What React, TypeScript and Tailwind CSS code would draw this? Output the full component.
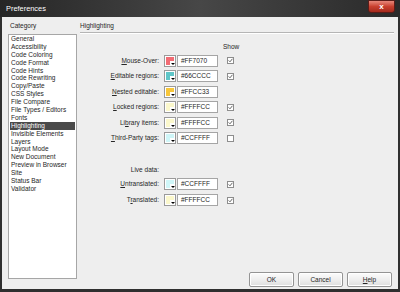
import type { ReactNode } from 'react';

const categories = [
  'General',
  'Accessibility',
  'Code Coloring',
  'Code Format',
  'Code Hints',
  'Code Rewriting',
  'Copy/Paste',
  'CSS Styles',
  'File Compare',
  'File Types / Editors',
  'Fonts',
  'Highlighting',
  'Invisible Elements',
  'Layers',
  'Layout Mode',
  'New Document',
  'Preview in Browser',
  'Site',
  'Status Bar',
  'Validator',
];

interface ColorRow {
  label: ReactNode;
  swatch: string;
  value: string;
  show: boolean | null;
}

const rows: ColorRow[] = [
  { label: <><u>M</u>ouse-Over:</>, swatch: 'bg-[#f26c74]', value: '#FF7070', show: true },
  { label: <><u>E</u>ditable regions:</>, swatch: 'bg-[#5fc6c8]', value: '#66CCCC', show: true },
  { label: <><u>N</u>ested editable:</>, swatch: 'bg-[#f7c63a]', value: '#FFCC33', show: null },
  { label: <><u>L</u>ocked regions:</>, swatch: 'bg-[#fbf8cc]', value: '#FFFFCC', show: true },
  { label: <>Li<u>b</u>rary items:</>, swatch: 'bg-[#fbf8cc]', value: '#FFFFCC', show: true },
  { label: <><u>T</u>hird-Party tags:</>, swatch: 'bg-[#cff6f8]', value: '#CCFFFF', show: false },
];

const liveRows: ColorRow[] = [
  { label: <><u>U</u>ntranslated:</>, swatch: 'bg-[#cff6f8]', value: '#CCFFFF', show: true },
  { label: <>T<u>r</u>anslated:</>, swatch: 'bg-[#fbf8cc]', value: '#FFFFCC', show: true },
];

function Checkbox({ checked }: { checked: boolean }) {
  return (
    <div className="w-[7px] h-[7px] border border-[#8d8d8d] bg-white flex items-center justify-center">
      {checked && (
        <svg width="5" height="5" viewBox="0 0 5 5">
          <path d="M0.6 2.4 L2 3.8 L4.4 0.8" stroke="#555" strokeWidth="0.9" fill="none" />
        </svg>
      )}
    </div>
  );
}

function Row({ row, h }: { row: ColorRow; h: string }) {
  return (
    <div className={`flex items-center ${h}`}>
      <div className="w-[79px] text-right">{row.label}</div>
      <div className="ml-[5px] w-[12px] h-[12px] border border-[#9a9a9a] bg-white p-[1px] relative">
        <div className={`w-full h-full ${row.swatch}`} />
        <div className="absolute right-0 bottom-0 w-[5px] h-[5px] bg-white flex items-end justify-center">
          <div className="w-0 h-0 border-l-[2px] border-r-[2px] border-t-[2px] border-l-transparent border-r-transparent border-t-black mb-[1px]" />
        </div>
      </div>
      <div className="ml-[1px] w-[41px] h-[12px] border border-[#a5a5a5] bg-white pl-[3px] flex items-center leading-none">
        {row.value}
      </div>
      <div className="ml-[9px]">{row.show !== null && <Checkbox checked={row.show} />}</div>
    </div>
  );
}

function Button({ children }: { children: ReactNode }) {
  return (
    <div className="w-[45px] h-[15px] rounded-[2px] border border-[#949494] bg-gradient-to-b from-[#fcfcfc] via-[#efefef] to-[#dedede] flex items-center justify-center shadow-[inset_0_0_0_1px_#ffffff]">
      {children}
    </div>
  );
}

export default function App() {
  return (
    <div
      className="w-[400px] h-[292px] bg-[#2f2f2f] flex flex-col text-[6.5px] text-[#262626] leading-[8px]"
      style={{ fontFamily: '"Liberation Sans", Arial, sans-serif' }}
    >
      {/* title bar */}
      <div className="h-[17px] flex items-start bg-gradient-to-r from-[#262626] via-[#474747] to-[#2a2a2a]">
        <div className="ml-[6px] mt-[4px] text-white text-[7.4px] leading-[9px]">Preferences</div>
        <div className="ml-auto mr-[5px] w-[27px] h-[13px] rounded-b-[3px] border border-[#5a1c18] bg-gradient-to-b from-[#e7877a] via-[#c9402f] to-[#a52a1c] flex items-center justify-center">
          <span className="text-white text-[8px] font-bold leading-none">x</span>
        </div>
      </div>

      {/* body */}
      <div className="flex-1 mx-[2px] mb-[3px] bg-[#eeeeee] flex">
        <div className="ml-[6px] w-[69px] flex flex-col">
          <div className="mt-[5px] h-[8px] pl-[2px]">Category</div>
          <div className="mt-[4px] h-[245px] border border-[#a6a6a6] bg-white px-[1px]">
            {categories.map((c) => (
              <div
                key={c}
                className={`h-[7.9px] pl-[1px] whitespace-nowrap ${
                  c === 'Highlighting' ? 'bg-[#4a4a4a] text-white' : ''
                }`}
              >
                {c}
              </div>
            ))}
          </div>
        </div>

        <div className="ml-[3px] flex-1 mr-[6px] flex flex-col">
          <div className="mt-[5px] h-[8px]">Highlighting</div>
          <div className="mt-[2px] mr-[-2px] h-[1px] bg-[#b5b5b5] border-b border-white box-content" />

          <div className="mt-[9px] h-[8px] pl-[143px]">Show</div>
          <div className="mt-[2px] flex flex-col">
            {rows.map((r, i) => (
              <Row key={i} row={r} h="h-[15.5px]" />
            ))}
          </div>

          <div className="mt-[20px] h-[8px] w-[79px] text-right">Live data:</div>
          <div className="mt-[2px] flex flex-col">
            {liveRows.map((r, i) => (
              <Row key={i} row={r} h="h-[16px]" />
            ))}
          </div>

          <div className="mt-auto mb-[2px] flex justify-end gap-[4px]">
            <Button>OK</Button>
            <Button>Cancel</Button>
            <Button>
              <span>
                <u>H</u>elp
              </span>
            </Button>
          </div>
        </div>
      </div>
    </div>
  );
}
